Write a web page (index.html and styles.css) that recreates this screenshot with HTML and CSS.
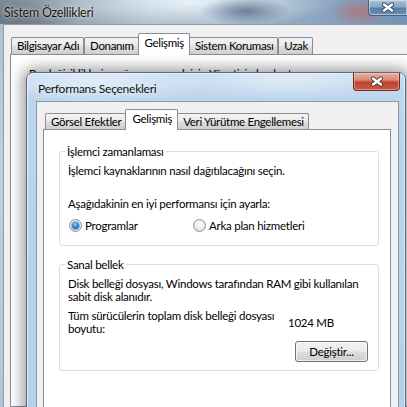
FILE: index.html
```html
<!DOCTYPE html>
<html lang="tr">
<head>
<meta charset="utf-8">
<title>Sistem Özellikleri</title>
<link rel="stylesheet" href="styles.css">
</head>
<body>
<div class="win">
  <div class="titlebar">
    <span class="title">Sistem Özellikleri</span>
    <span class="close-outer">
      <svg width="14" height="11" viewBox="-7 -5.5 14 11"><path d="M-4 -3 L4 3 M4 -3 L-4 3" stroke="#3b4a5c" stroke-width="4.2" stroke-linecap="round"/><path d="M-4 -3 L4 3 M4 -3 L-4 3" stroke="#fff" stroke-width="2.4" stroke-linecap="round"/></svg>
    </span>
  </div>
  <div class="body">
    <div class="tabs outer-tabs">
      <span class="tab">Bilgisayar Adı</span>
      <span class="tab">Donanım</span>
      <span class="tab active">Gelişmiş</span>
      <span class="tab">Sistem Koruması</span>
      <span class="tab">Uzak</span>
    </div>
    <div class="panel outer-panel">
      <p class="behind">Bu değişikliklerin çoğunu yapmak için Yönetici olarak oturum açın.</p>
    </div>
  </div>

  <div class="dialog">
    <div class="dlg-title">
      <span class="dlg-name">Performans Seçenekleri</span>
      <span class="close-red">
        <svg width="14" height="11" viewBox="-7 -5.5 14 11"><path d="M-4 -3 L4 3 M4 -3 L-4 3" stroke="#5a3a36" stroke-width="4.2" stroke-linecap="round"/><path d="M-4 -3 L4 3 M4 -3 L-4 3" stroke="#fff" stroke-width="2.4" stroke-linecap="round"/></svg>
      </span>
    </div>
    <div class="dlg-body">
      <div class="tabs inner-tabs">
        <span class="tab">Görsel Efektler</span>
        <span class="tab active">Gelişmiş</span>
        <span class="tab">Veri Yürütme Engellemesi</span>
      </div>
      <div class="panel inner-panel">
        <fieldset class="group g1">
          <legend>İşlemci zamanlaması</legend>
          <p class="line first">İşlemci kaynaklarının nasıl dağıtılacağını seçin.</p>
          <p class="line second">Aşağıdakinin en iyi performansı için ayarla:</p>
          <div class="radios">
            <label class="opt"><span class="radio on"><span class="dot"></span></span>Programlar</label>
            <label class="opt"><span class="radio"></span>Arka plan hizmetleri</label>
          </div>
        </fieldset>
        <fieldset class="group g2">
          <legend>Sanal bellek</legend>
          <p class="line first">Disk belleği dosyası, Windows tarafından RAM gibi kullanılan<br>sabit disk alanıdır.</p>
          <div class="size-row">
            <span class="size-label">Tüm sürücülerin toplam disk belleği dosyası<br>boyutu:</span>
            <span class="size-value">1024 MB</span>
          </div>
          <div class="btn-row"><span class="button">Değiştir...</span></div>
        </fieldset>
      </div>
    </div>
  </div>
</div>
</body>
</html>
```

FILE: styles.css
```css
* { box-sizing: border-box; }
html, body { margin: 0; padding: 0; }
body {
  width: 407px; height: 407px; overflow: hidden;
  font-family: "Lato", "Liberation Sans", sans-serif;
  font-size: 11.5px; line-height: 13px; letter-spacing: -0.25px; color: #000;
}
.win {
  position: relative;
  width: 407px; height: 407px; overflow: hidden;
  display: flex; flex-direction: column;
  background:
    linear-gradient(180deg, #aebfcd 0%, #c0cfdb 40%, #b3c6d6 100%);
}
.titlebar {
  height: 24px; flex: none;
  display: flex; justify-content: space-between; align-items: flex-start;
  background:
    radial-gradient(ellipse 45px 14px at 245px 11px, rgba(35,60,95,.55), transparent),
    radial-gradient(ellipse 30px 14px at 358px 12px, rgba(205,95,85,.55), transparent),
    radial-gradient(ellipse 150px 26px at 190px 2px, rgba(236,244,250,.95), transparent),
    radial-gradient(ellipse 60px 20px at 20px 20px, rgba(80,92,104,.5), transparent),
    linear-gradient(90deg, #7d8a96 0%, #98a8b5 18%, #aabccb 38%, #a2b8cb 58%, #8aa5c0 78%, #7392b5 100%);
}
.title {
  padding: 6px 0 0 4px;
  font-size: 12.5px; color: #161616;
  text-shadow: 0 0 6px rgba(255,255,255,.75), 0 0 2px rgba(255,255,255,.6);
}
.close-outer {
  width: 39px; height: 16px;
  display: flex; align-items: center; justify-content: center;
  border: 1px solid #48607c; border-top: none; border-right: none;
  border-radius: 0 0 0 4px;
  box-shadow: inset 0 0 0 1px rgba(255,255,255,.45);
  background: linear-gradient(180deg, #a9bfd6 0%, #8aa6c6 45%, #5c7ea6 55%, #6d8fb6 100%);
}
.body {
  flex: 1;
  margin: 0 -30px 0 3px;
  border-top: 1px solid #8b9aa8; border-left: 1px solid #8d9baa;
  background: #f0f0f0;
  padding: 8px 0 0 6px;
  display: flex; flex-direction: column;
}
.tabs {
  display: flex; align-items: flex-end;
  position: relative; z-index: 1;
}
.tab {
  display: flex; align-items: center;
  border: 1px solid #898c95; border-bottom: none;
  border-radius: 2px 2px 0 0;
  background: linear-gradient(180deg, #f3f3f3 0%, #ebebeb 45%, #dddddd 55%, #cfcfcf 100%);
  white-space: nowrap;
}
.tab.active {
  background: #fff;
  margin: 0 -1px -1px;
  position: relative; z-index: 2;
}
.outer-tabs { height: 21px; padding-left: 1px; letter-spacing: -0.35px; }
.outer-tabs .tab { height: 17px; padding: 0 4px 1px 5px; }
.outer-tabs .tab.active { height: 22px; padding: 0 5px 4px 6px; }
.panel {
  background: #fff;
  border: 1px solid #898c95;
}
.outer-panel { flex: 1; padding: 12px 0 0 18px; }
.behind { margin: 0; white-space: nowrap; }

.dialog {
  position: absolute; left: 26px; top: 72px;
  width: 380px; height: 345px;
  border: 1px solid #5d6b78;
  border-radius: 7px 7px 0 0;
  padding: 0 6px 0 9px;
  display: flex; flex-direction: column;
  background:
    radial-gradient(ellipse 120px 22px at 70px 8px, rgba(230,240,250,.85), transparent),
    radial-gradient(ellipse 120px 20px at 260px 6px, rgba(235,243,250,.7), transparent),
    linear-gradient(180deg, #c6dbef 0%, #bdd4ec 30px, #b6cfea 100%);
  box-shadow: 0 0 14px 4px rgba(0,0,0,.38), inset 0 0 0 1px rgba(255,255,255,.55);
}
.dlg-title {
  height: 28px; flex: none;
  display: flex; justify-content: space-between; align-items: flex-start;
}
.dlg-name {
  padding: 9px 0 0 2px; font-size: 12px; color: #111;
  text-shadow: 0 0 5px rgba(255,255,255,.8);
}
.close-red {
  width: 47px; height: 18px; margin-right: -1px;
  display: flex; align-items: center; justify-content: center;
  border: 1px solid #6c2a22; border-top: none;
  border-radius: 0 0 4px 4px;
  box-shadow: inset 0 0 0 1px rgba(255,220,210,.45);
  background: linear-gradient(180deg, #eab0a2 0%, #dc8a78 40%, #c2432f 55%, #c65a44 100%);
}
.dlg-body {
  flex: 1;
  border: 1px solid #8c99a5; border-bottom: none;
  background: #f0f0f0;
  padding: 7px 7px 0 6px;
  display: flex; flex-direction: column;
}
.inner-tabs { height: 20px; padding-left: 2px; letter-spacing: -0.3px; }
.inner-tabs .tab { height: 16px; padding: 0 4px 1px 5px; }
.inner-tabs .tab.active { height: 21px; padding: 0 5px 4px 6px; }
.inner-panel { flex: 1; padding: 15px 11px 0 15px; }

.group {
  margin: 0; min-width: 0;
  border: 1px solid #d5dfe5; border-radius: 3px;
  padding: 0 8px 13px 8px;
}
.group legend { padding: 0 2px; margin-left: -3px; line-height: 13px; }
.line { margin: 0; white-space: nowrap; }
.g1 .first { margin-top: 6px; }
.g1 .second { margin-top: 20px; }
.radios { display: flex; margin-top: 9px; height: 13px; align-items: center; }
.opt { display: flex; align-items: center; gap: 3px; white-space: nowrap; }
.opt:first-child { width: 124px; }
.radio {
  width: 13px; height: 13px; border-radius: 50%;
  border: 1px solid #8f9396; margin-left: 1px;
  background: radial-gradient(circle at 50% 40%, #ffffff 0%, #eeeeee 45%, #cfcfcf 100%);
  display: flex; align-items: center; justify-content: center;
}
.dot {
  width: 7px; height: 7px; border-radius: 50%;
  background: radial-gradient(circle at 45% 35%, #9cd3ff 0%, #2b87d8 45%, #0b4e9c 100%);
  box-shadow: 0 0 0 1px rgba(30,70,120,.35);
}
.g2 { margin-top: 12px; padding-bottom: 8px; }
.g2 .first { margin-top: 6px; }
.size-row {
  display: grid; grid-template-columns: 220px auto;
  align-items: center; margin-top: 6px;
}
.size-label { white-space: nowrap; }
.btn-row { display: flex; justify-content: flex-end; margin-top: 6px; padding-right: 2px; }
.button {
  width: 73px; height: 21px;
  display: flex; align-items: center; justify-content: center;
  border: 1px solid #707070; border-radius: 3px;
  background: linear-gradient(180deg, #f2f2f2 0%, #ebebeb 48%, #dddddd 52%, #cfcfcf 100%);
  box-shadow: inset 0 0 0 1px rgba(255,255,255,.7);
}
```
